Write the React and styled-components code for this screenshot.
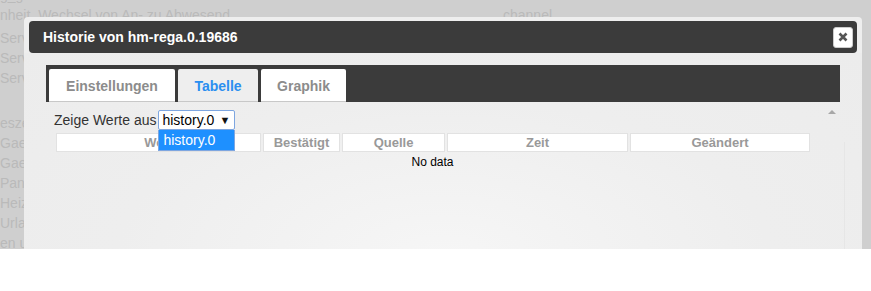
import React from "react";
import styled, { createGlobalStyle } from "styled-components";

const GlobalStyle = createGlobalStyle`
  body {
    margin: 0;
    font-family: "Liberation Sans", Arial, sans-serif;
    background: #ffffff;
  }
`;

const Page = styled.div`
  width: 871px;
  height: 291px;
  background: #ffffff;
`;

const Backdrop = styled.div`
  position: relative;
  height: 249px;
  background: #cfcfcf;
  overflow: hidden;
`;

const BackList = styled.div`
  display: flex;
  flex-direction: column;
  margin-top: -15px;
`;

const BackRow = styled.div`
  display: flex;
  height: 20px;
  line-height: 20px;
  font-size: 14px;
  color: #bababa;
  white-space: nowrap;
  margin-top: ${(p) => p.gap || 0}px;
`;

const BackCell = styled.span`
  width: ${(p) => p.w || "auto"};
`;

const Dialog = styled.div`
  position: absolute;
  left: 24px;
  top: 17px;
  width: 838px;
  height: 240px;
  box-sizing: border-box;
  padding: 4px 5px 0 5px;
  background: #eeeeee;
  border-radius: 4px;
  display: flex;
  flex-direction: column;
`;

const TitleBar = styled.div`
  height: 32px;
  background: #3b3b3b;
  border-radius: 4px;
  display: flex;
  align-items: center;
  justify-content: space-between;
  padding: 0 4px 0 14px;
`;

const Title = styled.span`
  color: #ffffff;
  font-weight: bold;
  font-size: 14px;
`;

const CloseButton = styled.button`
  width: 20px;
  height: 21px;
  padding: 0;
  border: 1px solid #cccccc;
  border-radius: 3px;
  background: #ffffff;
  display: flex;
  align-items: center;
  justify-content: center;
`;

const Content = styled.div`
  flex: 1;
  margin: 0 -5px;
  padding: 12px 22px 0 22px;
  position: relative;
  background: radial-gradient(ellipse at 50% 100%, #f6f6f6 0%, #eeeeee 55%, #ececec 100%);
`;

const TabBar = styled.div`
  height: 37px;
  box-sizing: border-box;
  background: #3b3b3b;
  padding: 4px 3px 0 3px;
  display: flex;
  gap: 3px;
  align-items: flex-end;
`;

const Tab = styled.div`
  width: ${(p) => p.w}px;
  height: 33px;
  box-sizing: border-box;
  background: ${(p) => (p.active ? "#eeeeee" : "#ffffff")};
  border-bottom: 1px solid #c8c8c8;
  border-radius: 2px 2px 0 0;
  display: flex;
  align-items: center;
  justify-content: center;
  font-size: 14px;
  font-weight: bold;
  color: ${(p) => (p.active ? "#2b8ff0" : "#8c8c8c")};
  padding-top: 2px;
`;

const Panel = styled.div`
  padding: 8px 8px 0 8px;
  position: relative;
`;

const ScrollArrow = styled.div`
  position: absolute;
  right: 4px;
  top: 8px;
  width: 0;
  height: 0;
  border-left: 4px solid transparent;
  border-right: 4px solid transparent;
  border-bottom: 4px solid #a8a8a8;
`;

const FilterRow = styled.div`
  display: flex;
  align-items: center;
  height: 20px;
  font-size: 14px;
  color: #333333;
`;

const SelectWrap = styled.div`
  position: relative;
  margin-left: 2px;
`;

const Select = styled.div`
  width: 77px;
  height: 20px;
  box-sizing: border-box;
  border: 1px solid #7ea6e0;
  border-radius: 2px;
  background: #ffffff;
  display: flex;
  align-items: center;
  padding: 0 4px 0 3px;
  justify-content: space-between;
  font-size: 14px;
  color: #000000;
`;

const Caret = styled.span`
  font-size: 11px;
  color: #111111;
`;

const Options = styled.div`
  position: absolute;
  left: 0;
  top: 20px;
  width: 77px;
  box-sizing: border-box;
  border: 1px solid #7ea6e0;
  border-top: none;
  background: #ffffff;
  z-index: 2;
`;

const Option = styled.div`
  height: 20px;
  line-height: 20px;
  padding-left: 4px;
  font-size: 14px;
  background: ${(p) => (p.selected ? "#1e90ff" : "#ffffff")};
  color: ${(p) => (p.selected ? "#ffffff" : "#000000")};
`;

const Table = styled.div`
  display: flex;
  gap: 2px;
  margin: 3px 0 0 2px;
  width: 755px;
`;

const HeadCell = styled.div`
  width: ${(p) => p.w}px;
  height: 19px;
  box-sizing: border-box;
  background: #ffffff;
  border: 1px solid #e2e2e2;
  display: flex;
  align-items: center;
  justify-content: center;
  font-size: 13px;
  font-weight: bold;
  color: #999999;
`;

const NoData = styled.div`
  width: 757px;
  text-align: center;
  font-size: 12px;
  color: #000000;
  margin-top: 3px;
`;

const ScrollTrack = styled.div`
  position: absolute;
  right: 17px;
  top: 89px;
  bottom: 0;
  width: 1px;
  background: #e6e6e6;
`;

const backRows = [
  { text: "g_g" },
  { text: "nheit_Wechsel von An- zu Abwesend", right: "channel" },
  { text: "Servicemeldungen", gap: 3 },
  { text: "Servicemeldungen" },
  { text: "Servicemeldungen" },
  { text: "eszeit", gap: 25 },
  { text: "Gaestezimmer" },
  { text: "Gaeste WC" },
  { text: "Panik" },
  { text: "Heizperiode" },
  { text: "Urlaub" },
  { text: "en und Fenster" },
];

const columns = [
  { label: "Wert", w: 205 },
  { label: "Bestätigt", w: 77 },
  { label: "Quelle", w: 103 },
  { label: "Zeit", w: 181 },
  { label: "Geändert", w: 180 },
];

const App = () => {
  return (
    <Page>
      <GlobalStyle />
      <Backdrop>
        <BackList>
          {backRows.map((r, i) => (
            <BackRow key={i} gap={r.gap}>
              <BackCell w="503px">{r.text}</BackCell>
              {r.right && <BackCell>{r.right}</BackCell>}
            </BackRow>
          ))}
        </BackList>

        <Dialog>
          <TitleBar>
            <Title>Historie von hm-rega.0.19686</Title>
            <CloseButton>
              <svg width="10" height="10" viewBox="0 0 10 10">
                <path d="M1.5 1.5 L8.5 8.5 M8.5 1.5 L1.5 8.5" stroke="#555" strokeWidth="2.6" strokeLinecap="butt" />
              </svg>
            </CloseButton>
          </TitleBar>

          <Content>
            <TabBar>
              <Tab w={126}>Einstellungen</Tab>
              <Tab w={80} active>Tabelle</Tab>
              <Tab w={85}>Graphik</Tab>
            </TabBar>
            <Panel>
              <ScrollArrow />
              <FilterRow>
                Zeige Werte aus
                <SelectWrap>
                  <Select>
                    history.0 <Caret>▼</Caret>
                  </Select>
                  <Options>
                    <Option selected>history.0</Option>
                  </Options>
                </SelectWrap>
              </FilterRow>
              <Table>
                {columns.map((c) => (
                  <HeadCell key={c.label} w={c.w}>
                    {c.label}
                  </HeadCell>
                ))}
              </Table>
              <NoData>No data</NoData>
            </Panel>
            <ScrollTrack />
          </Content>
        </Dialog>
      </Backdrop>
    </Page>
  );
};

export default App;
